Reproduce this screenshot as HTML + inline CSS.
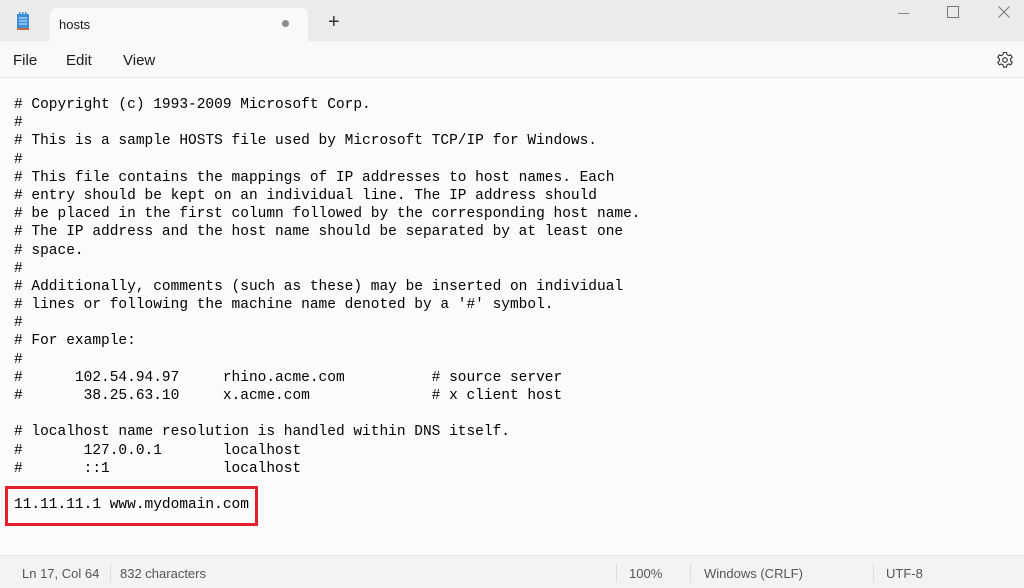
<!DOCTYPE html>
<html><head><meta charset="utf-8"><style>
body{margin:0;width:1024px;height:587px;overflow:hidden;background:#fbfbfb;font-family:"Liberation Sans",sans-serif;position:relative}
.title{position:absolute;left:0;top:0;width:1024px;height:41px;background:#ebebeb}
.tab{position:absolute;left:50px;top:8px;width:258px;height:33px;background:#f9f9f9;border-radius:7px 7px 0 0}
.menu{position:absolute;left:0;top:41px;width:1024px;height:36px;background:#f9f9f9;border-bottom:1px solid #e5e5e5}
.menu span{position:absolute;top:11px;font-size:15px;color:#1a1a1a}
pre{position:absolute;left:14px;top:96px;margin:0;font-family:"Liberation Mono",monospace;font-size:14.5px;line-height:18.18px;color:#000}
.box{position:absolute;left:5px;top:486px;width:253px;height:40px;border:3px solid #e4202e;box-sizing:border-box}
.status{position:absolute;left:0;top:555px;width:1024px;height:32px;background:#f3f3f3;border-top:1px solid #e3e3e3;font-size:13px;color:#555}
.status span{position:absolute;top:10px}
.sep{position:absolute;top:8px;width:1px;height:18px;background:#dcdcdc}
</style></head><body>
<div class="title">
<svg style="position:absolute;left:16px;top:12px" width="14" height="20"><rect x="1" y="2" width="12" height="15" fill="#3c8fd8"/><rect x="1" y="16" width="12" height="2" fill="#c8693a"/><g stroke="#d8ecff" stroke-width="1"><line x1="3" y1="6" x2="11" y2="6"/><line x1="3" y1="9" x2="11" y2="9"/><line x1="3" y1="12" x2="11" y2="12"/></g><g fill="#3c8fd8"><rect x="3" y="0" width="1.5" height="3"/><rect x="6" y="0" width="1.5" height="3"/><rect x="9" y="0" width="1.5" height="3"/></g></svg>
<div class="tab"><span style="position:absolute;left:9px;top:9px;font-size:13px;color:#1a1a1a">hosts</span><span style="position:absolute;left:232px;top:12px;width:7px;height:7px;border-radius:50%;background:#8a8a8a"></span></div>
<span style="position:absolute;left:328px;top:11px;font-size:20px;color:#333;font-weight:300">+</span>
<div style="position:absolute;left:898px;top:13px;width:11px;height:1px;background:#888"></div>
<div style="position:absolute;left:947px;top:6px;width:10px;height:10px;border:1px solid #777"></div>
<svg style="position:absolute;left:998px;top:6px" width="12" height="12"><path d="M0.5 0.5L11.5 11.5M11.5 0.5L0.5 11.5" stroke="#777" stroke-width="1"/></svg>
</div>
<div class="menu"><span style="left:13px">File</span><span style="left:66px">Edit</span><span style="left:123px">View</span>
<svg style="position:absolute;left:996px;top:10px" width="18" height="18" viewBox="0 0 18 18"><path d="M7.5 1.5h3l.5 2.2 1.6.9 2.1-.8 1.5 2.6-1.7 1.5v1.8l1.7 1.5-1.5 2.6-2.1-.8-1.6.9-.5 2.2h-3l-.5-2.2-1.6-.9-2.1.8-1.5-2.6 1.7-1.5V7.9L1.8 6.4l1.5-2.6 2.1.8 1.6-.9z" fill="none" stroke="#333" stroke-width="1.1"/><circle cx="9" cy="9" r="2.3" fill="none" stroke="#333" stroke-width="1.1"/></svg></div>
<pre># Copyright (c) 1993-2009 Microsoft Corp.
#
# This is a sample HOSTS file used by Microsoft TCP/IP for Windows.
#
# This file contains the mappings of IP addresses to host names. Each
# entry should be kept on an individual line. The IP address should
# be placed in the first column followed by the corresponding host name.
# The IP address and the host name should be separated by at least one
# space.
#
# Additionally, comments (such as these) may be inserted on individual
# lines or following the machine name denoted by a '#' symbol.
#
# For example:
#
#      102.54.94.97     rhino.acme.com          # source server
#       38.25.63.10     x.acme.com              # x client host

# localhost name resolution is handled within DNS itself.
#	127.0.0.1       localhost
#	::1             localhost

11.11.11.1 www.mydomain.com</pre>
<div class="box"></div>
<div class="status"><span style="left:22px">Ln 17, Col 64</span><div class="sep" style="left:110px"></div><span style="left:120px">832 characters</span>
<div class="sep" style="left:616px"></div><span style="left:629px">100%</span><div class="sep" style="left:690px"></div><span style="left:704px">Windows (CRLF)</span><div class="sep" style="left:873px"></div><span style="left:886px">UTF-8</span></div>
</body></html>
